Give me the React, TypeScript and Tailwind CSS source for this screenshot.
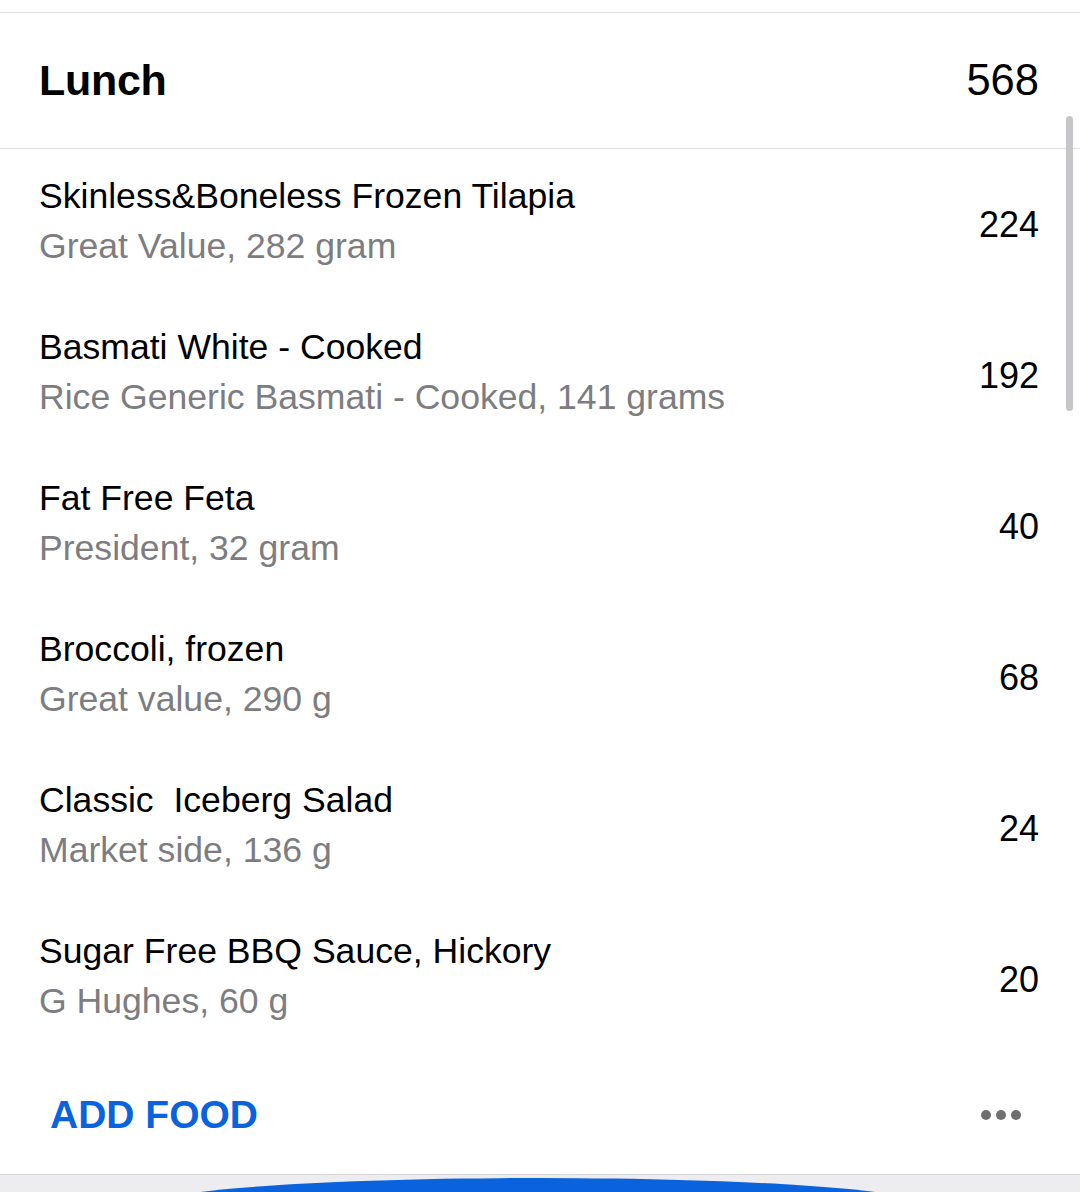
const items = [
  { name: "Skinless&Boneless Frozen Tilapia", detail: "Great Value, 282 gram", cal: 224 },
  { name: "Basmati White - Cooked", detail: "Rice Generic Basmati - Cooked, 141 grams", cal: 192 },
  { name: "Fat Free Feta", detail: "President, 32 gram", cal: 40 },
  { name: "Broccoli, frozen", detail: "Great value, 290 g", cal: 68 },
  { name: "Classic\u00a0 Iceberg Salad", detail: "Market side, 136 g", cal: 24 },
  { name: "Sugar Free BBQ Sauce, Hickory", detail: "G Hughes, 60 g", cal: 20 },
];

export default function App() {
  return (
    <div className="relative w-[1080px] h-[1192px] overflow-hidden bg-white font-['Liberation_Sans',Arial,sans-serif] text-black">
      <div className="h-[12px]" />

      {/* meal header */}
      <div className="flex h-[137px] items-center justify-between border-y border-[#e2e2e4] pl-[39px] pr-[41px]">
        <span className="text-[43px] font-bold tracking-[-0.3px] leading-none">Lunch</span>
        <span className="text-[43.5px] leading-none">568</span>
      </div>

      {/* food rows */}
      <div className="flex flex-col">
        {items.map((it) => (
          <div key={it.name} className="flex h-[151px] justify-between pl-[39px] pr-[41px]">
            <div className="flex flex-col pt-[22px] text-[35.6px] leading-[50px]">
              <span>{it.name}</span>
              <span className="text-[#7d7d80]">{it.detail}</span>
            </div>
            <span className="self-center text-[36px] leading-none">{it.cal}</span>
          </div>
        ))}
      </div>

      {/* footer */}
      <div className="flex h-[119px] items-center justify-between pl-[50px] pr-[59px]">
        <span className="text-[39px] font-bold leading-none text-[#0a63dc]">ADD FOOD</span>
        <div className="flex gap-[5px]">
          <span className="h-[10px] w-[10px] rounded-full bg-[#6f6f72]" />
          <span className="h-[10px] w-[10px] rounded-full bg-[#6f6f72]" />
          <span className="h-[10px] w-[10px] rounded-full bg-[#6f6f72]" />
        </div>
      </div>

      <div className="flex h-[20px] justify-center overflow-hidden border-t border-[#d6d6da] bg-[#ededf0]">
        <div className="mt-[3px] ml-[-5px] h-[56px] w-[780px] shrink-0 rounded-[50%] bg-[#0a63dc]" />
      </div>

      {/* scroll indicator */}
      <div className="absolute left-[1066px] top-[116px] h-[295px] w-[7px] rounded-full bg-[#c6c6c8]" />
    </div>
  );
}
